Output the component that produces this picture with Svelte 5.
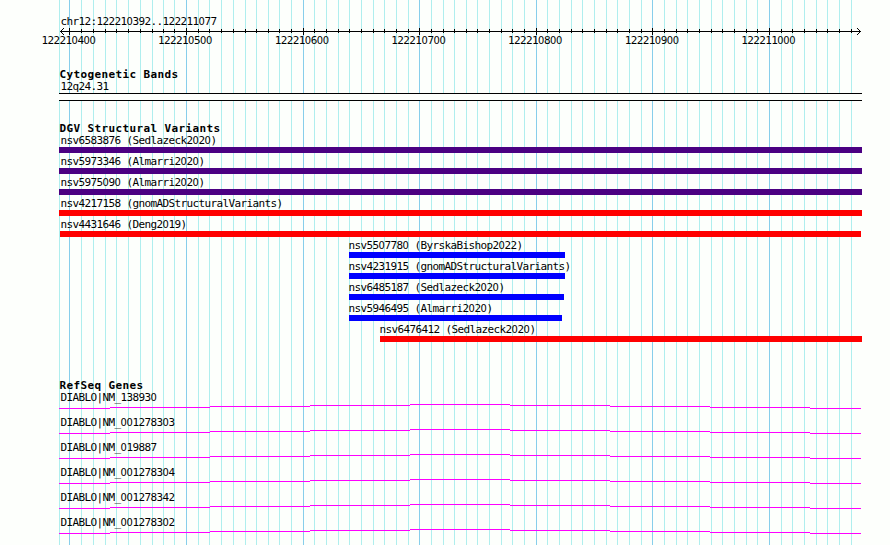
<script>
  const minor = [59, 81, 93, 105, 116, 128, 140, 152, 163, 174, 198, 209, 221, 233, 245, 256, 268, 279, 291, 314, 326, 338, 349, 361, 373, 384, 396, 408, 431, 443, 454, 466, 477, 489, 501, 512, 524, 547, 559, 571, 582, 594, 606, 617, 629, 641, 664, 676, 687, 699, 711, 722, 734, 746, 757, 781, 792, 804, 816, 827, 839, 851];
  const major = [69, 186, 303, 419, 536, 652, 769];
  const scale = ['122210400', '122210500', '122210600', '122210700', '122210800', '122210900', '122211000'];
  const variants = [
    { name: 'nsv6583876 (Sedlazeck2020)', start: 59, end: 862, text: 60, color: 'indigo' },
    { name: 'nsv5973346 (Almarri2020)', start: 59, end: 862, text: 60, color: 'indigo' },
    { name: 'nsv5975090 (Almarri2020)', start: 59, end: 862, text: 60, color: 'indigo' },
    { name: 'nsv4217158 (gnomADStructuralVariants)', start: 59, end: 862, text: 60, color: 'red' },
    { name: 'nsv4431646 (Deng2019)', start: 60, end: 861, text: 60, color: 'red' },
    { name: 'nsv5507780 (ByrskaBishop2022)', start: 349, end: 565, text: 348, color: 'blue' },
    { name: 'nsv4231915 (gnomADStructuralVariants)', start: 349, end: 565, text: 348, color: 'blue' },
    { name: 'nsv6485187 (Sedlazeck2020)', start: 349, end: 564, text: 348, color: 'blue' },
    { name: 'nsv5946495 (Almarri2020)', start: 349, end: 562, text: 348, color: 'blue' },
    { name: 'nsv6476412 (Sedlazeck2020)', start: 380, end: 862, text: 379, color: 'red' }
  ];
  const genes = ['138930', '001278303', '019887', '001278304', '001278342', '001278302'].map((id) => `DIABLO|NM_${id}`);
  const intron = [[59, 110, 4], [110, 210, 3], [210, 310, 2], [310, 410, 1], [410, 510, 0], [510, 610, 1], [610, 710, 2], [710, 810, 3], [810, 861, 4]];
  const runs = (s) => s.split(/(0+)/).filter(Boolean);
</script>

{#snippet label(s)}{#each runs(s) as run}{#if run[0] === '0'}<span class="zero">{run}</span>{:else}{run}{/if}{/each}{/snippet}

<main class="browser">
  <svg class="grid" width="890" height="545" shape-rendering="crispEdges" aria-hidden="true">
    {#each minor as x}<rect {x} y="0" width="1" height="545" fill="#afeeee" />{/each}
    {#each major as x}<rect {x} y="0" width="1" height="545" fill="#87ceeb" />{/each}
  </svg>

  <section class="ruler">
    <div class="label region">{@render label('chr12:122210392..122211077')}</div>
    <svg class="axis" width="890" height="7" shape-rendering="crispEdges" aria-hidden="true">
      <rect x="60" y="3" width="801" height="1" />
      {#each minor.slice(1) as x}<rect {x} y="1" width="1" height="4" />{/each}
      {#each major as x}<rect {x} y="0" width="1" height="7" />{/each}
      {#each [1, 2, 3] as d}
        <rect x={60 + d} y={3 - d} width="1" height="1" /><rect x={60 + d} y={3 + d} width="1" height="1" />
        <rect x={860 - d} y={3 - d} width="1" height="1" /><rect x={860 - d} y={3 + d} width="1" height="1" />
      {/each}
    </svg>
    <div class="numbers">
      {#each scale as n}<div class="label">{@render label(n)}</div>{/each}
    </div>
  </section>

  <section class="bands">
    <h2>Cytogenetic Bands</h2>
    <div class="label">12q24.31</div>
    <div class="band"></div>
  </section>

  <section class="variants">
    <h2>DGV Structural Variants</h2>
    {#each variants as v}
      <div class="variant">
        <div class="label" style="margin-left: {v.text}px">{@render label(v.name)}</div>
        <div class="bar {v.color}" style="margin-left: {v.start}px; width: {v.end - v.start}px"></div>
      </div>
    {/each}
  </section>

  <section class="genes">
    <h2>RefSeq Genes</h2>
    {#each genes as g}
      <div class="gene">
        <div class="label">{@render label(g)}</div>
        <svg width="890" height="5" shape-rendering="crispEdges" aria-hidden="true">
          {#each intron as [a, b, y]}<rect x={a} {y} width={b - a} height="1" fill="#f0f" />{/each}
        </svg>
      </div>
    {/each}
  </section>
</main>

<style>
  :global(body) { margin: 0; background: #fdfffc; }
  .browser {
    position: relative;
    width: 890px;
    height: 545px;
    overflow: hidden;
    background: #fdfffc;
    color: #000;
    font-family: "DejaVu Sans Mono", monospace;
    font-size: 11px;
  }
  .grid { position: absolute; inset: 0; }
  section { position: relative; }
  svg { display: block; }
  .label {
    height: 13px;
    line-height: 13px;
    margin-left: 60px;
    letter-spacing: -0.622px;
    text-indent: 0.4px;
    white-space: pre;
  }
  .zero {
    font-family: "DejaVu Sans Condensed", "DejaVu Sans", sans-serif;
    font-stretch: condensed;
    letter-spacing: -0.299px;
  }
  h2 {
    margin: 0 0 0 59px;
    height: 12px;
    font: bold 11px/13px "DejaVu Sans Mono", monospace;
    letter-spacing: 0.378px;
    text-indent: 0.5px;
    white-space: pre;
  }
  .ruler { padding-top: 15px; }
  .numbers { display: flex; gap: 62.67px; margin-top: -1px; padding-left: 41px; }
  .numbers .label { margin: 0; width: 54px; }
  .bands { padding-top: 21px; }
  .band {
    box-sizing: border-box;
    width: 803px;
    height: 8px;
    margin-left: 59px;
    border: solid #000;
    border-width: 1px 0;
    background: #fdfffc;
  }
  .variants { padding-top: 21px; }
  .variant { height: 21px; }
  .bar { height: 6px; }
  .indigo { background: #4b0082; }
  .red { background: #f00; }
  .blue { background: #00f; }
  .genes { padding-top: 35px; }
  .gene { height: 25px; }
</style>
